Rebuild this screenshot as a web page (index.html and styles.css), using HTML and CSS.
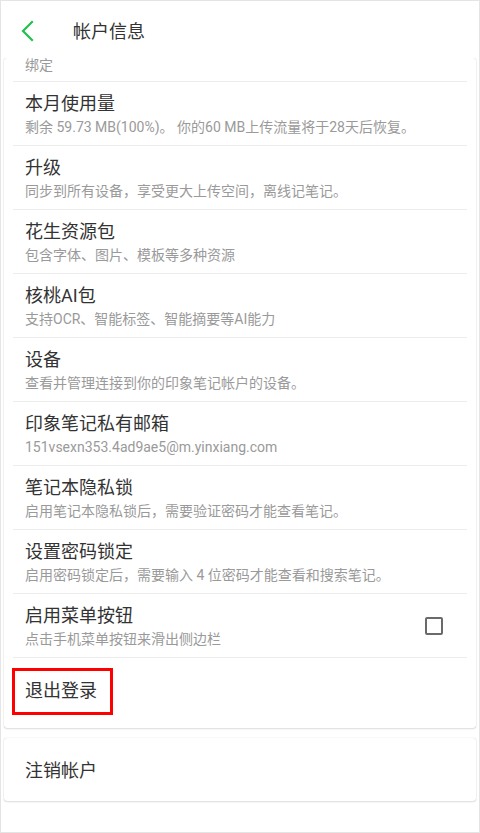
FILE: index.html
```html
<!DOCTYPE html>
<html lang="zh-CN">
<head>
    <meta charset="UTF-8">
    <meta name="viewport" content="width=device-width, initial-scale=1.0">
    <title>帐户信息</title>
    <link rel="stylesheet" href="styles.css">
</head>
<body>
<div class="app">
    <div class="header">
        <span class="back">
            <svg width="14" height="22" viewBox="0 0 14 22">
                <path d="M11 2 L2 11 L11 20" fill="none" stroke="#22c04f" stroke-width="2.2" stroke-linecap="square"/>
            </svg>
        </span>
        <h1 class="title">帐户信息</h1>
    </div>

    <div class="scroll">
        <div class="card">
            <div class="row partial">
                <div class="sub">绑定</div>
            </div>
            <div class="row">
                <div class="name">本月使用量</div>
                <div class="sub">剩余 59.73 MB(100%)。 你的60 MB上传流量将于28天后恢复。</div>
            </div>
            <div class="row">
                <div class="name">升级</div>
                <div class="sub">同步到所有设备，享受更大上传空间，离线记笔记。</div>
            </div>
            <div class="row">
                <div class="name">花生资源包</div>
                <div class="sub">包含字体、图片、模板等多种资源</div>
            </div>
            <div class="row">
                <div class="name">核桃AI包</div>
                <div class="sub">支持OCR、智能标签、智能摘要等AI能力</div>
            </div>
            <div class="row">
                <div class="name">设备</div>
                <div class="sub">查看并管理连接到你的印象笔记帐户的设备。</div>
            </div>
            <div class="row">
                <div class="name">印象笔记私有邮箱</div>
                <div class="sub">151vsexn353.4ad9ae5@m.yinxiang.com</div>
            </div>
            <div class="row">
                <div class="name">笔记本隐私锁</div>
                <div class="sub">启用笔记本隐私锁后，需要验证密码才能查看笔记。</div>
            </div>
            <div class="row">
                <div class="name">设置密码锁定</div>
                <div class="sub">启用密码锁定后，需要输入 4 位密码才能查看和搜索笔记。</div>
            </div>
            <div class="row row-check">
                <div class="text">
                    <div class="name">启用菜单按钮</div>
                    <div class="sub">点击手机菜单按钮来滑出侧边栏</div>
                </div>
                <span class="checkbox"></span>
            </div>
            <div class="row row-logout">
                <span class="highlight">退出登录</span>
            </div>
        </div>

        <div class="card">
            <div class="row row-single">
                <div class="name">注销帐户</div>
            </div>
        </div>
    </div>
</div>
</body>
</html>
```

FILE: styles.css
```css
body {
    margin: 0;
    background-color: #ffffff;
    font-family: Roboto, "Noto Sans CJK SC", sans-serif;
    color: #333;
}

.app {
    width: 480px;
    height: 833px;
    box-sizing: border-box;
    border: 1px solid #e4e4e4;
    overflow: hidden;
    display: flex;
    flex-direction: column;
}

.header {
    height: 57px;
    flex-shrink: 0;
    display: flex;
    align-items: center;
    background-color: #ffffff;
}

.back {
    width: 14px;
    height: 22px;
    margin-left: 20px;
    margin-top: 3px;
    display: flex;
}

.title {
    margin: 0 0 0 38px;
    font-size: 18px;
    font-weight: normal;
    color: #333;
}

.scroll {
    flex: 1;
    overflow: hidden;
    padding: 0 3px;
}

.card {
    background-color: #ffffff;
    border-radius: 3px;
    box-shadow: 0 0 1px rgba(0, 0, 0, 0.25), 0 1px 2px rgba(0, 0, 0, 0.12);
    margin-bottom: 10px;
}

.row {
    margin: 0 9px;
    padding: 10px 12px 9px;
    border-bottom: 1px solid #ececec;
}

.name {
    font-size: 18px;
    line-height: 24px;
    color: #333;
}

.sub {
    font-size: 14px;
    line-height: 18px;
    margin-top: 2px;
    color: #9a9a9a;
}

.row.partial {
    padding-top: 0;
}

.partial .sub {
    margin-top: 0;
    line-height: 14px;
}

.row-check {
    display: flex;
    align-items: center;
    justify-content: space-between;
}

.checkbox {
    width: 14px;
    height: 14px;
    border: 2px solid #6a6a6a;
    border-radius: 2px;
    margin-right: 12px;
}

.row-logout {
    border-bottom: none;
    padding: 10px 0 13px;
}

.highlight {
    display: inline-block;
    margin-left: -1px;
    padding: 8px 13px 9px 10px;
    border: 3px solid #ff0000;
    font-size: 18px;
    line-height: 24px;
    color: #333;
}

.row-single {
    border-bottom: none;
    padding: 21px 12px 18px;
}
```
